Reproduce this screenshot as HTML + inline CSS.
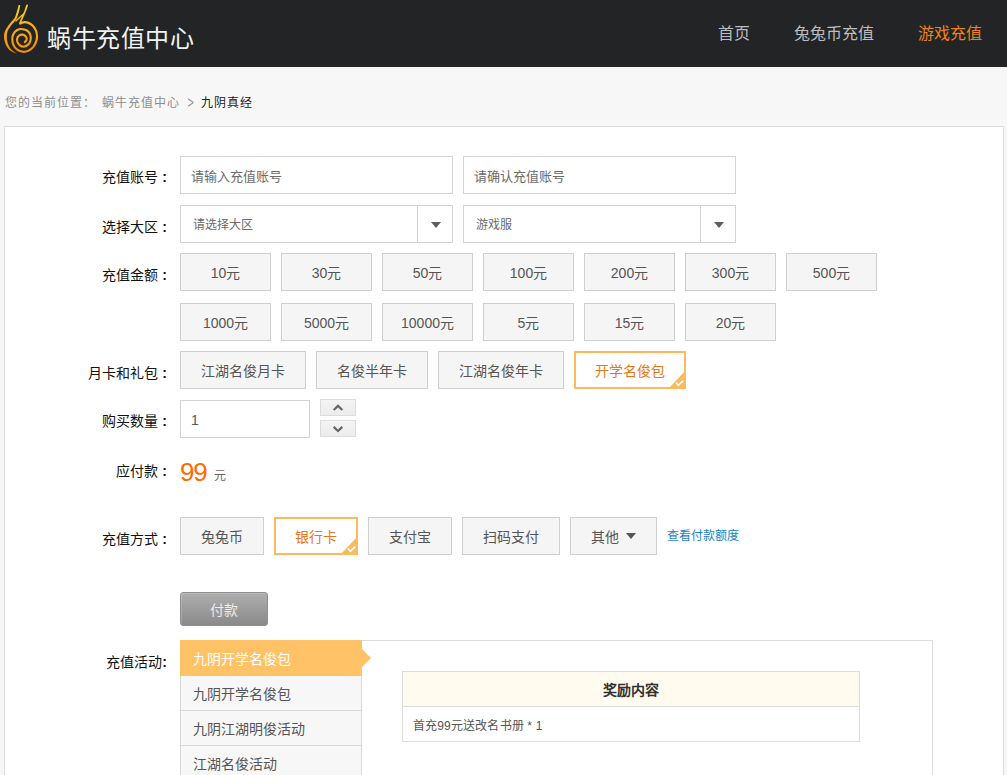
<!DOCTYPE html>
<html lang="zh-CN">
<head>
<meta charset="utf-8">
<title>蜗牛充值中心</title>
<style>
*{box-sizing:border-box;margin:0;padding:0}
html,body{width:1007px;height:775px;overflow:hidden}
body{background:#f7f7f7;font-family:"Liberation Sans",sans-serif;font-size:14px;color:#555;position:relative}
.abs{position:absolute}
#hd{position:absolute;left:0;top:0;width:1007px;height:67px;background:#222426}
#logo{position:absolute;left:0;top:0;width:60px;height:66px}
#title{position:absolute;left:47px;top:23px;font-size:24px;line-height:32px;letter-spacing:0.55px;color:#f2f2f2;white-space:nowrap}
#nav{position:absolute;right:3px;top:0;height:66px;white-space:nowrap}
#nav a{display:inline-block;padding:0 22px;font-size:16px;line-height:68px;color:#bdbdbd;text-decoration:none}
#nav a.on{color:#ee8418}
#bc{position:absolute;left:4.5px;top:94px;height:18px;line-height:18px;font-size:12px;letter-spacing:1px;color:#8e8e8e;white-space:nowrap}
#bc span{position:absolute;top:0}
#bc .cur{color:#222}
#panel{position:absolute;left:4px;top:126px;width:1000px;height:700px;background:#fff;border:1px solid #ddd}
.lb{position:absolute;left:0;width:167px;text-align:right;font-size:14px;line-height:20px;color:#111;white-space:nowrap}
.inp{position:absolute;height:38px;border:1px solid #d3d3d3;background:#fff;font-size:13px;line-height:39px;color:#6b6b6b;padding-left:10px;white-space:nowrap}
.sel{position:absolute;height:38px;width:273px;border:1px solid #d3d3d3;background:#fff;font-size:12px;line-height:38px;color:#6b6b6b;padding-left:12px;white-space:nowrap}
.sel i{position:absolute;right:34px;top:0;width:1px;height:36px;background:#d3d3d3}
.sel b{position:absolute;right:11px;top:16px;width:0;height:0;border-left:5.5px solid transparent;border-right:5.5px solid transparent;border-top:6px solid #5e5e5e}
.bt{position:absolute;height:38px;border:1px solid #cfcfcf;background:#f5f5f5;font-size:14px;line-height:39px;color:#555;text-align:center;white-space:nowrap}
.bt.on{border:2px solid #fdb95c;background:#fff;color:#e77817;line-height:37px}
.bt.on:after{content:"";position:absolute;right:-1px;bottom:-1px;width:0;height:0;border-left:16px solid transparent;border-bottom:17px solid #f9bb60}
.bt.on svg{position:absolute;right:-1px;bottom:-1px;width:12px;height:10px;z-index:2}
.amt{width:91px}
.spin{position:absolute;left:320px;width:36px;height:17px;border:1px solid #dcdcdc;background:linear-gradient(#f4f4f4,#ececec)}
.spin svg{position:absolute;left:11px;top:4px;width:12px;height:8px}
#pay{position:absolute;left:180px;top:592px;width:88px;height:34px;border:1px solid #8f8f8f;border-radius:3px;background:linear-gradient(#aeaeae,#8a8a8a);box-shadow:inset 1px 1px 0 rgba(255,255,255,.18);color:#ececec;font-size:14px;line-height:34px;text-align:center}
#act{position:absolute;left:180px;top:640px;width:753px;height:200px;border:1px solid #ddd;background:#fff}
.tab{position:absolute;left:180px;width:182px;height:35px;background:#f7f7f7;border:1px solid #d8d8d8;border-top:0;font-size:14px;line-height:37px;color:#555;padding-left:12px;white-space:nowrap}
.tab.on{background:#ffc266;border:0;color:#fff;padding-left:13px;line-height:39px}
.tab.on:after{content:"";position:absolute;left:182px;top:9px;width:0;height:0;border-top:9px solid transparent;border-bottom:9px solid transparent;border-left:9px solid #ffc266}
#tbl{position:absolute;left:402px;top:671px;width:458px;height:71px;border:1px solid #ddd;background:#fff}
#tbl .th{height:35px;border-bottom:1px solid #ddd;background:#fffbee;text-align:center;font-size:14px;font-weight:bold;line-height:36px;color:#333}
#tbl .td{height:34px;font-size:12px;line-height:38px;letter-spacing:0.15px;color:#555;padding-left:10px}
</style>
</head>
<body>
<div id="hd">
  <svg id="logo" viewBox="0 0 60 66">
    <defs>
      <linearGradient id="lg" x1="0" y1="5" x2="0" y2="54" gradientUnits="userSpaceOnUse">
        <stop offset="0" stop-color="#f8d91a"/>
        <stop offset="0.45" stop-color="#f5ae14"/>
        <stop offset="1" stop-color="#ef8a0e"/>
      </linearGradient>
    </defs>
    <g fill="none" stroke="url(#lg)" stroke-linecap="round" stroke-linejoin="round">
      <path stroke-width="2.3" transform="translate(24.6 52) scale(0.94 0.97) translate(-24.6 -52)" d="M19.8,22.5 C20.6,22.3 22.9,21.2 24.8,21.3 C26.7,21.4 29.2,22.1 31.0,23.2 C32.8,24.3 34.5,26.1 35.6,27.9 C36.8,29.7 37.5,32.0 37.7,34.1 C38.0,36.1 37.8,38.2 37.2,40.3 C36.6,42.3 35.5,44.7 34.1,46.5 C32.7,48.2 30.6,49.9 28.7,50.7 C26.7,51.6 24.5,51.9 22.5,51.7 C20.5,51.5 18.3,50.7 16.7,49.6 C15.0,48.4 13.6,46.7 12.8,44.9 C11.9,43.1 11.5,40.7 11.5,38.7 C11.5,36.8 11.9,34.9 12.8,33.3 C13.6,31.8 15.2,30.3 16.7,29.4 C18.1,28.6 19.9,28.2 21.7,28.3 C23.4,28.3 25.6,28.9 27.1,29.8 C28.6,30.8 30.0,32.5 30.6,34.1 C31.2,35.7 31.3,37.8 31.0,39.5 C30.7,41.2 29.8,43.0 28.7,44.2 C27.5,45.3 25.5,46.3 24.0,46.5 C22.5,46.7 20.9,46.1 19.8,45.3 C18.6,44.5 17.6,43.1 17.0,41.8 C16.5,40.6 16.3,39.1 16.7,38.0 C17.0,36.8 18.0,35.5 19.0,34.9 C19.9,34.2 21.3,33.9 22.5,34.1 C23.6,34.3 25.2,35.1 25.9,36.0 C26.7,36.9 26.9,38.5 26.7,39.5 C26.5,40.5 25.1,41.4 24.8,41.8"/>
      <path stroke-width="1.7" d="M27.1,5.4 C26.8,6.3 25.8,9.1 25.2,10.8 C24.5,12.6 24.0,13.9 23.1,15.9 C22.2,17.8 20.5,22.0 20.1,23.3"/>
      <path stroke-width="1.4" d="M15.9,20.9 C17.1,19.8 22.0,15.4 23.2,14.3"/>
      <path fill="url(#lg)" stroke="none" d="M18.6,5.1 C18.3,6.2 17.6,9.5 16.9,11.6 C16.2,13.8 15.8,15.9 14.6,18.0 C13.3,20.0 11.0,21.8 9.5,24.0 C7.9,26.2 6.0,28.9 5.1,31.0 C4.2,33.0 4.1,34.5 4.0,36.4 C4.0,38.3 4.3,40.6 5.0,42.6 C5.6,44.6 6.6,46.6 7.9,48.2 C9.2,49.8 11.1,51.1 12.5,52.1 C14.0,53.0 16.0,53.4 16.7,53.7 L16.7,53.5 C16.0,53.1 14.2,52.2 13.0,51.1 C11.8,50.0 10.4,48.4 9.5,46.9 C8.5,45.3 7.8,43.6 7.4,41.8 C6.9,40.1 6.8,38.2 6.8,36.4 C6.9,34.6 7.0,32.9 7.7,31.0 C8.5,29.1 9.9,27.1 11.3,25.2 C12.7,23.3 14.8,21.6 16.0,19.5 C17.3,17.4 18.0,14.8 18.7,12.4 C19.5,10.0 20.0,6.5 20.3,5.3 Z"/>
    </g>
  </svg>
  <div id="title">蜗牛充值中心</div>
  <div id="nav"><a>首页</a><a>兔兔币充值</a><a class="on">游戏充值</a></div>
</div>

<div id="bc"><span style="left:0">您的当前位置：</span><span style="left:97.5px">蜗牛充值中心</span><span style="left:182px;transform:scale(.9,1.45);transform-origin:50% 54%">&gt;</span><span class="cur" style="left:196.5px">九阴真经</span></div>

<div id="panel"></div>

<!-- row 1 -->
<div class="lb" style="top:167px">充值账号 <b>:</b></div>
<div class="inp" style="left:180px;top:156px;width:273px">请输入充值账号</div>
<div class="inp" style="left:463px;top:156px;width:273px">请确认充值账号</div>

<!-- row 2 -->
<div class="lb" style="top:217px">选择大区 <b>:</b></div>
<div class="sel" style="left:180px;top:205px">请选择大区<i></i><b></b></div>
<div class="sel" style="left:463px;top:205px">游戏服<i></i><b></b></div>

<!-- row 3 -->
<div class="lb" style="top:265px">充值金额 <b>:</b></div>
<div class="bt amt" style="left:180px;top:253px">10元</div>
<div class="bt amt" style="left:281px;top:253px">30元</div>
<div class="bt amt" style="left:382px;top:253px">50元</div>
<div class="bt amt" style="left:483px;top:253px">100元</div>
<div class="bt amt" style="left:584px;top:253px">200元</div>
<div class="bt amt" style="left:685px;top:253px">300元</div>
<div class="bt amt" style="left:786px;top:253px">500元</div>
<div class="bt amt" style="left:180px;top:303px">1000元</div>
<div class="bt amt" style="left:281px;top:303px">5000元</div>
<div class="bt amt" style="left:382px;top:303px">10000元</div>
<div class="bt amt" style="left:483px;top:303px">5元</div>
<div class="bt amt" style="left:584px;top:303px">15元</div>
<div class="bt amt" style="left:685px;top:303px">20元</div>

<!-- row 4 -->
<div class="lb" style="top:363px">月卡和礼包 <b>:</b></div>
<div class="bt" style="left:180px;top:351px;width:126px">江湖名俊月卡</div>
<div class="bt" style="left:316px;top:351px;width:112px">名俊半年卡</div>
<div class="bt" style="left:438px;top:351px;width:126px">江湖名俊年卡</div>
<div class="bt on" style="left:574px;top:351px;width:112px">开学名俊包<svg viewBox="0 0 12 10"><path d="M3.0,4.4 L5.4,7.4 L10.2,2.6" fill="none" stroke="#fff" stroke-width="1.6"/></svg></div>

<!-- row 5 -->
<div class="lb" style="top:411px">购买数量 <b>:</b></div>
<div class="inp" style="left:180px;top:400px;width:130px;font-size:14px;color:#555">1</div>
<div class="spin" style="top:399px"><svg viewBox="0 0 12 8"><path d="M1.7,6.0 L6,1.9 L10.3,6.0" fill="none" stroke="#686868" stroke-width="2.3"/></svg></div>
<div class="spin" style="top:420px"><svg viewBox="0 0 12 8"><path d="M1.7,1.9 L6,6.0 L10.3,1.9" fill="none" stroke="#686868" stroke-width="2.3"/></svg></div>

<!-- row 6 -->
<div class="lb" style="top:461px">应付款 <b>:</b></div>
<div class="abs" style="left:180px;top:456px;font-size:26px;line-height:32px;letter-spacing:-1.2px;color:#ff6a00;white-space:nowrap">99</div>
<div class="abs" style="left:214px;top:466px;font-size:12px;line-height:20px;color:#666">元</div>

<!-- row 7 -->
<div class="lb" style="top:529px">充值方式 <b>:</b></div>
<div class="bt" style="left:180px;top:517px;width:84px">兔兔币</div>
<div class="bt on" style="left:274px;top:517px;width:84px">银行卡<svg viewBox="0 0 12 10"><path d="M3.0,4.4 L5.4,7.4 L10.2,2.6" fill="none" stroke="#fff" stroke-width="1.6"/></svg></div>
<div class="bt" style="left:368px;top:517px;width:84px">支付宝</div>
<div class="bt" style="left:462px;top:517px;width:98px">扫码支付</div>
<div class="bt" style="left:570px;top:517px;width:87px;text-align:left;padding-left:20px">其他<span style="position:absolute;left:55px;top:15px;width:0;height:0;border-left:5.5px solid transparent;border-right:5.5px solid transparent;border-top:6px solid #555"></span></div>
<div class="abs" style="left:667px;top:526px;font-size:12px;line-height:20px;color:#1c7fc8;white-space:nowrap">查看付款额度</div>

<div id="pay">付款</div>

<!-- activity -->
<div class="lb" style="top:652px">充值活动<b>:</b></div>
<div id="act"></div>
<div class="tab on" style="top:640px;height:36px">九阴开学名俊包</div>
<div class="tab" style="top:676px">九阴开学名俊包</div>
<div class="tab" style="top:711px">九阴江湖明俊活动</div>
<div class="tab" style="top:746px">江湖名俊活动</div>
<div id="tbl"><div class="th">奖励内容</div><div class="td">首充99元送改名书册 * 1</div></div>
</body>
</html>
